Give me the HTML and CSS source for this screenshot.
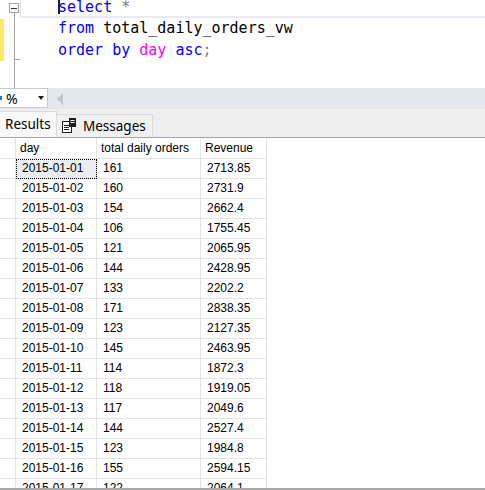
FILE: index.html
```html
<!DOCTYPE html>
<html>
<head>
<meta charset="utf-8">
<link rel="stylesheet" href="styles.css">
</head>
<body>
<div class="app">
  <div class="editor">
    <div class="gutter">
      <div class="change-col"><div class="change-bar"></div></div>
      <div class="fold-col">
        <div class="fold-box"><span class="fold-minus"></span></div>
        <div class="fold-line"><div class="fold-tick"></div></div>
      </div>
    </div>
    <div class="code">
      <div class="line current"><span class="caret"></span><span class="kw">select</span> <span class="op">*</span></div>
      <div class="line"><span class="kw">from</span> total_daily_orders_vw</div>
      <div class="line"><span class="kw">order</span> <span class="kw">by</span> <span class="fn">day</span> <span class="kw">asc</span><span class="op">;</span></div>
    </div>
  </div>
  <div class="zoombar">
    <div class="zoom-select"><span class="zoom-sel-mark"></span><span class="zoom-pct">%</span><span class="zoom-arrow"></span></div>
    <span class="scroll-left"></span>
  </div>
  <div class="tabs">
    <div class="tab active">Results</div>
    <div class="tab">
      <svg class="msg-icon" width="15" height="15" viewBox="0 0 15 15">
        <rect x="0.5" y="3.5" width="9" height="11" fill="#fff" stroke="#1e1e1e"/>
        <path d="M2 7.5h5M2 9.5h5M2 11.5h5" stroke="#1e1e1e"/>
        <rect x="7" y="0" width="7" height="9" fill="#1e1e1e"/>
        <path d="M8.5 2.5h4M8.5 4.5h4" stroke="#fff"/>
      </svg>
      <span>Messages</span>
    </div>
  </div>
  <div class="results">
    <div class="grid">
      <div class="row head"><div class="c rh"></div><div class="c">day</div><div class="c">total daily orders</div><div class="c">Revenue</div></div>
      <div class="row"><div class="c rh"></div><div class="c sel">2015-01-01</div><div class="c">161</div><div class="c">2713.85</div></div>
      <div class="row"><div class="c rh"></div><div class="c">2015-01-02</div><div class="c">160</div><div class="c">2731.9</div></div>
      <div class="row"><div class="c rh"></div><div class="c">2015-01-03</div><div class="c">154</div><div class="c">2662.4</div></div>
      <div class="row"><div class="c rh"></div><div class="c">2015-01-04</div><div class="c">106</div><div class="c">1755.45</div></div>
      <div class="row"><div class="c rh"></div><div class="c">2015-01-05</div><div class="c">121</div><div class="c">2065.95</div></div>
      <div class="row"><div class="c rh"></div><div class="c">2015-01-06</div><div class="c">144</div><div class="c">2428.95</div></div>
      <div class="row"><div class="c rh"></div><div class="c">2015-01-07</div><div class="c">133</div><div class="c">2202.2</div></div>
      <div class="row"><div class="c rh"></div><div class="c">2015-01-08</div><div class="c">171</div><div class="c">2838.35</div></div>
      <div class="row"><div class="c rh"></div><div class="c">2015-01-09</div><div class="c">123</div><div class="c">2127.35</div></div>
      <div class="row"><div class="c rh"></div><div class="c">2015-01-10</div><div class="c">145</div><div class="c">2463.95</div></div>
      <div class="row"><div class="c rh"></div><div class="c">2015-01-11</div><div class="c">114</div><div class="c">1872.3</div></div>
      <div class="row"><div class="c rh"></div><div class="c">2015-01-12</div><div class="c">118</div><div class="c">1919.05</div></div>
      <div class="row"><div class="c rh"></div><div class="c">2015-01-13</div><div class="c">117</div><div class="c">2049.6</div></div>
      <div class="row"><div class="c rh"></div><div class="c">2015-01-14</div><div class="c">144</div><div class="c">2527.4</div></div>
      <div class="row"><div class="c rh"></div><div class="c">2015-01-15</div><div class="c">123</div><div class="c">1984.8</div></div>
      <div class="row"><div class="c rh"></div><div class="c">2015-01-16</div><div class="c">155</div><div class="c">2594.15</div></div>
      <div class="row"><div class="c rh"></div><div class="c">2015-01-17</div><div class="c">122</div><div class="c">2064.1</div></div>
    </div>
  </div>
  <div class="bottom-bar"></div>
</div>
</body>
</html>
```
FILE: styles.css
```css
* { box-sizing: border-box; }
html, body { margin: 0; padding: 0; background: #fff; }
.app { width: 485px; height: 490px; overflow: hidden; display: flex; flex-direction: column; }

.editor { height: 88px; flex-shrink: 0; display: flex; background: #fff; overflow: hidden; }
.gutter { width: 20px; display: flex; flex-shrink: 0; }
.change-col { width: 4px; }
.change-bar { margin-top: 19px; height: 42px; background: #fee866; }
.fold-col { margin-left: 5px; width: 11px; display: flex; flex-direction: column; }
.fold-box { margin-top: 3px; width: 10px; height: 10px; border: 1px solid #a5a5a5; background: #fff; display: flex; align-items: center; justify-content: center; }
.fold-minus { width: 6px; height: 1px; background: #333; }
.fold-line { flex: 1; margin-left: 5px; border-left: 1px solid #a5a5a5; }
.fold-tick { height: 47px; width: 5px; border-bottom: 1px solid #a5a5a5; }

.code { flex: 1; margin-top: -3.3px; font-family: "DejaVu Sans Mono", "Liberation Mono", monospace; font-size: 15px; line-height: 21.6px; color: #000; }
.line { padding-left: 38px; height: 21.6px; white-space: pre; }
.line.current { box-shadow: inset 0 -2px #eaeaf2, inset 1px 0 #e3e3ea; }
.caret { display: inline-block; width: 0; height: 15px; border-left: 2px solid #1a1a2e; margin-right: -2px; vertical-align: -2px; }
.kw { color: #0000ff; }
.op { color: #808080; }
.fn { color: #ff00ff; }

.zoombar { height: 21px; flex-shrink: 0; background: #e6e7ed; display: flex; align-items: center; }
.zoom-select { width: 48px; height: 20px; margin-top: -1px; background: #fff; border: 1px solid #c6c8d2; border-left: none; display: flex; align-items: center; font-family: "Noto Sans", "Liberation Sans", sans-serif; font-size: 14px; color: #000; }
.zoom-sel-mark { width: 2px; height: 4px; background: #1e78d6; }
.zoom-pct { margin-left: 4px; }
.zoom-arrow { margin-left: 20px; width: 0; height: 0; border-left: 3.5px solid transparent; border-right: 3.5px solid transparent; border-top: 4px solid #1e1e1e; }
.scroll-left { margin-left: 9px; width: 0; height: 0; border-top: 6px solid transparent; border-bottom: 6px solid transparent; border-right: 6px solid #c4c5cc; }

.tabs { height: 29px; flex-shrink: 0; background: #efefef; border-bottom: 1px solid #a6a6a6; display: flex; align-items: flex-end; font-family: "Noto Sans", "Liberation Sans", sans-serif; font-size: 13.5px; color: #000; }
.tab { height: 23px; display: flex; align-items: center; padding: 0 6px 1px 5px; border: 1px solid #dadada; border-bottom: none; border-left: none; background: #f0f0f0; }
.tab.active { height: 26px; width: 57px; background: #f9f9f9; padding-bottom: 2px; }
.msg-icon { margin-right: 6px; }

.results { height: 350px; flex-shrink: 0; overflow: hidden; background: #fff; }
.grid { font-family: "Liberation Sans", Arial, sans-serif; font-size: 12px; color: #000; }
.row { display: grid; grid-template-columns: 16px 81px 104px 66px; height: 20px; }
.row.head { height: 21px; }
.c { border-right: 1px solid #e3e3e3; border-bottom: 1px solid #e3e3e3; padding-left: 6px; line-height: 19px; white-space: nowrap; overflow: hidden; }
.head .c { padding-left: 4px; line-height: 20px; }
.c.rh { padding: 0; }
.c.sel { background: #e9edf1; outline: 1px dotted #000; outline-offset: -1px; }

.bottom-bar { height: 2px; flex-shrink: 0; background: #a9a9a9; }
```
